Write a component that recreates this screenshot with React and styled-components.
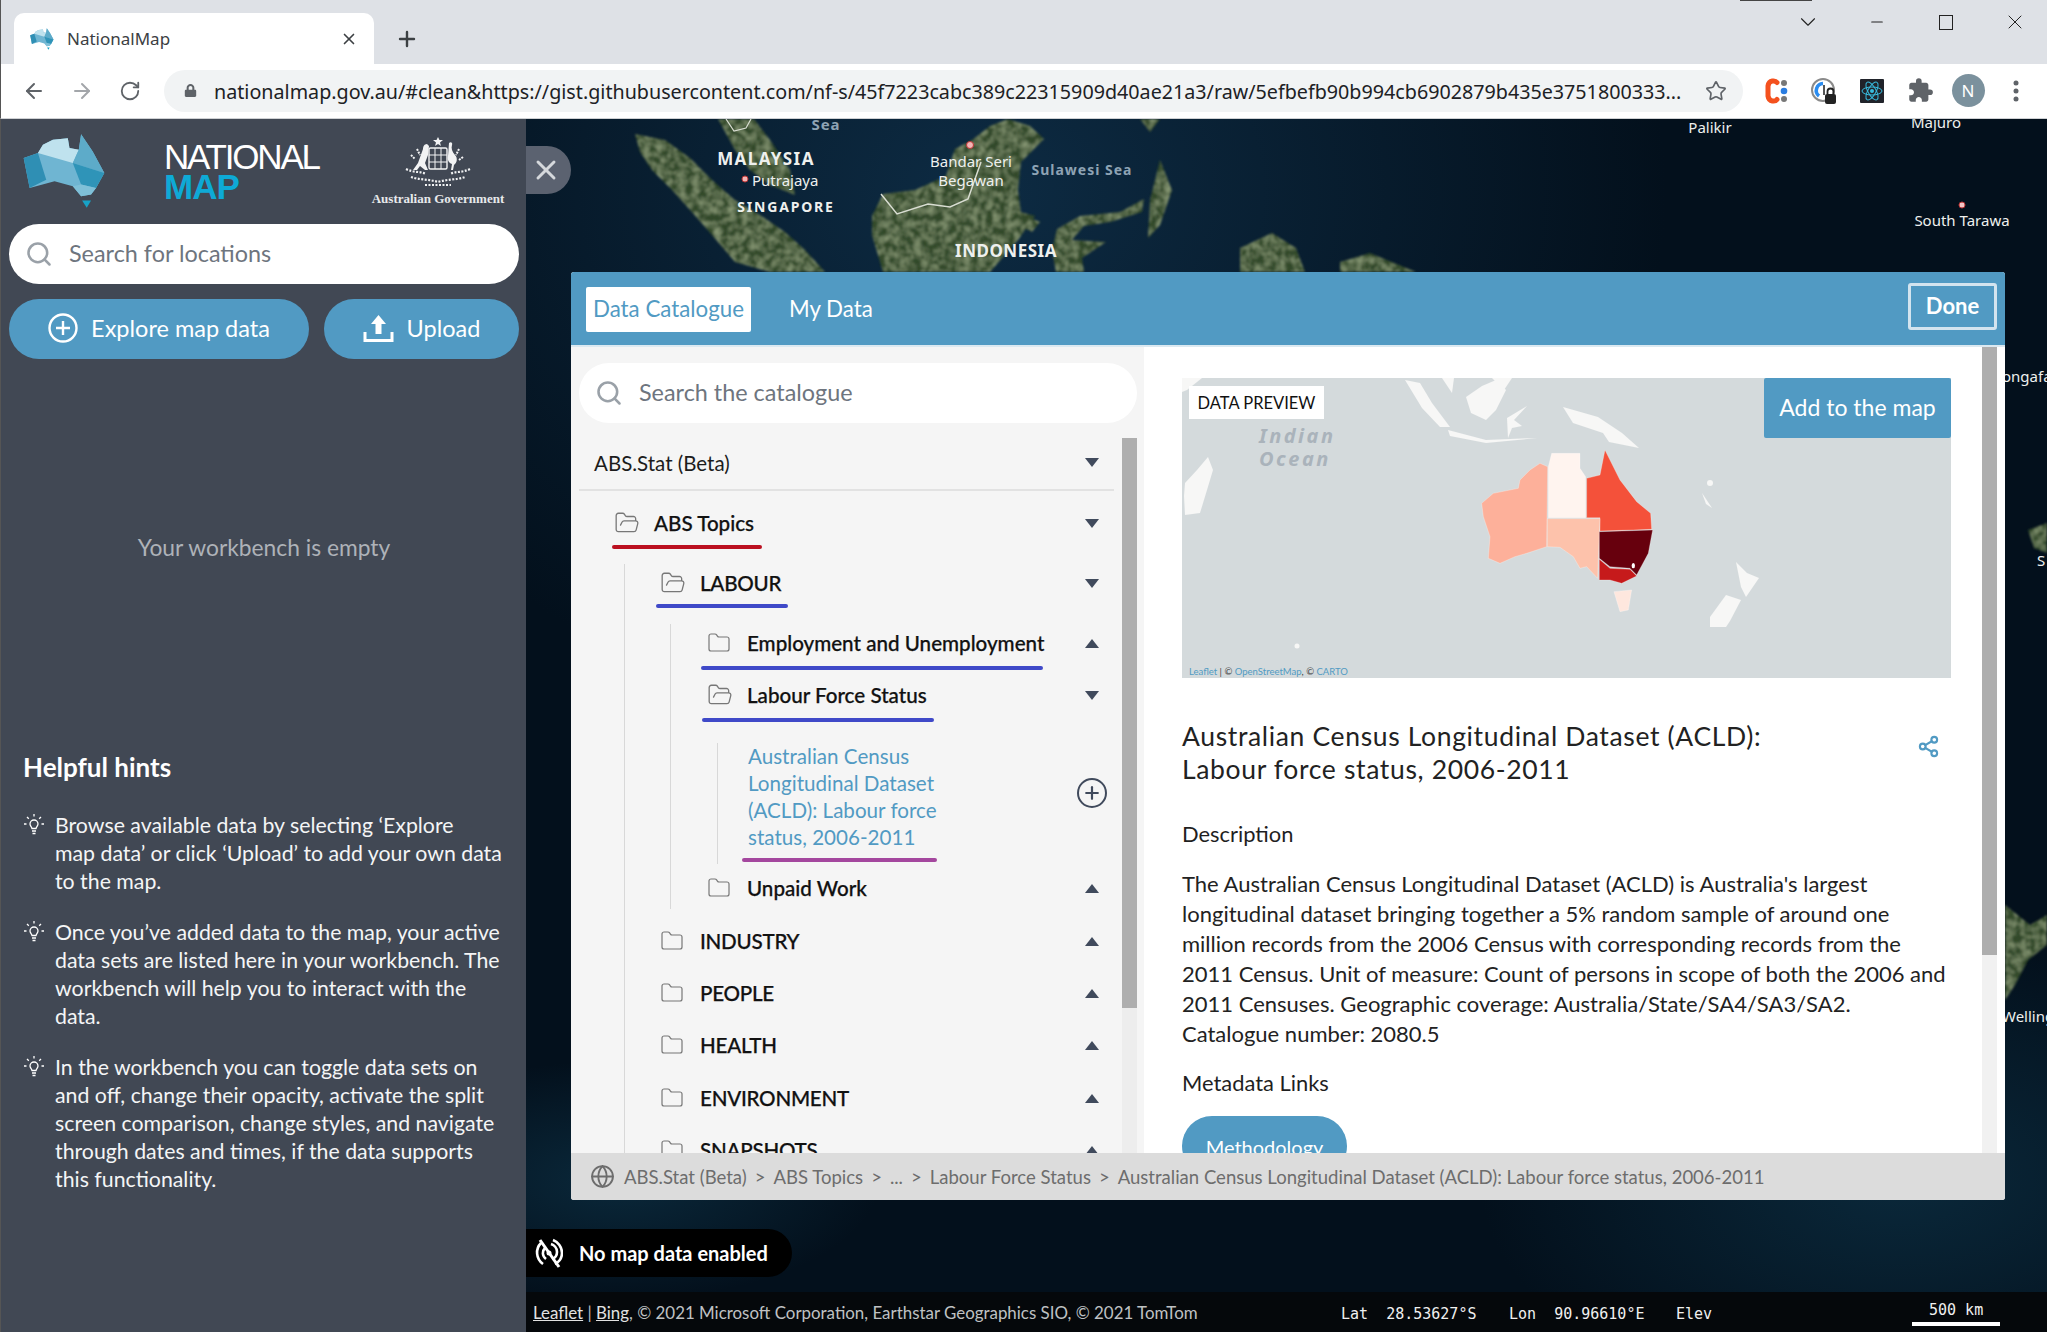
import React from 'react';
import styled, { createGlobalStyle } from 'styled-components';
import { ArrowLeft, ArrowRight, RotateCw, Star, Plus, X, Search, Minus, ChevronDown, Globe, Folder, FolderOpen, Share2 } from 'lucide-react';
import { FaLock } from 'react-icons/fa';
import { MdExtension } from 'react-icons/md';

const GlobalStyle = createGlobalStyle`
  html, body {
    margin: 0;
    padding: 0;
    background: #04101c;
  }
  * {
    box-sizing: border-box;
  }
`;

const BLUE = '#519ac3';
const UI_FONT = "Lato, 'Noto Sans', sans-serif";

const Page = styled.div`
  width: 2047px;
  height: 1332px;
  display: flex;
  flex-direction: column;
  overflow: hidden;
  font-family: ${UI_FONT};
`;

/* browser chrome */
const TabStrip = styled.div`
  position: relative;
  height: 64px;
  flex: none;
  display: flex;
  align-items: flex-end;
  padding-left: 13px;
  background: #dee1e6;
  border-left: 1px solid #555;
`;

const Tab = styled.div`
  width: 360px;
  height: 51px;
  display: flex;
  align-items: center;
  padding: 0 16px;
  background: #fff;
  border-radius: 10px 10px 0 0;
  color: #3c4043;
  font-family: 'Noto Sans', sans-serif;
  font-size: 17px;
`;

const TabTitle = styled.span`
  margin-left: 13px;
  flex: 1;
`;

const NewTab = styled.div`
  display: flex;
  align-self: center;
  margin: 13px 0 0 21px;
  color: #3c4043;
`;

const WindowControls = styled.div`
  display: flex;
  align-self: flex-start;
  margin-left: auto;
  margin-right: -2px;
  height: 44px;
`;

const WindowButton = styled.div`
  width: 69px;
  display: flex;
  align-items: center;
  justify-content: center;
  color: #222;
`;

const MaxBox = styled.div`
  width: 14px;
  height: 15px;
  border: 1.5px solid #222;
`;

const ProfileStrip = styled.div`
  position: absolute;
  top: 0;
  left: 1739px;
  width: 72px;
  height: 1px;
  background: #444;
`;

const Toolbar = styled.div`
  height: 55px;
  flex: none;
  display: flex;
  align-items: center;
  padding-bottom: 1px;
  background: #fff;
  border-left: 1px solid #555;
  border-bottom: 1px solid #cfd1d4;
`;

const NavButton = styled.div`
  width: 48px;
  display: flex;
  justify-content: center;
  color: ${p => (p.$muted ? '#a3a6aa' : '#5f6368')};
  margin-left: ${p => p.$first ? '9px' : 0};
`;

const UrlBar = styled.div`
  width: 1579px;
  height: 42px;
  margin-left: 10px;
  display: flex;
  align-items: center;
  padding: 0 16px 0 20px;
  background: #f1f3f4;
  border-radius: 21px;
  color: #5f6368;
`;

const UrlText = styled.div`
  margin-left: 17px;
  padding-top: 1px;
  flex: 1;
  color: #202124;
  font-family: 'Noto Sans', sans-serif;
  font-size: 19.72px;
  white-space: nowrap;
  overflow: hidden;
`;

const Extensions = styled.div`
  display: flex;
  align-items: center;
  margin-left: 9px;
`;

const Extension = styled.div`
  width: 48px;
  display: flex;
  justify-content: center;
  color: #5f6368;
`;

const Avatar = styled.div`
  width: 33px;
  height: 33px;
  display: flex;
  align-items: center;
  justify-content: center;
  border-radius: 50%;
  background: #7b919d;
  color: #fff;
  font-family: 'Noto Sans', sans-serif;
  font-size: 17px;
`;

const Content = styled.div`
  flex: 1;
  display: flex;
  min-height: 0;
`;

/* left sidebar */
const Sidebar = styled.aside`
  width: 526px;
  flex: none;
  padding: 0 7px 0 8px;
  background: #414854;
  border-left: 1px solid #555;
  color: #fff;
`;

const LogoRow = styled.div`
  height: 105px;
  display: flex;
  align-items: flex-start;
  padding: 14px 16px 0 14px;
`;

const Wordmark = styled.div`
  margin: 9px 0 0 58px;
  line-height: 30px;
  font-family: 'Liberation Sans', sans-serif;
  font-size: 35px;
`;

const WordLine = styled.div`
  color: ${p => p.$accent ? '#0eaad6' : '#fff'};
  font-weight: ${p => p.$accent ? 700 : 400};
  letter-spacing: ${p => p.$accent ? '-1px' : '-2.2px'};
`;

const GovBlock = styled.div`
  width: 130px;
  margin-left: auto;
  margin-top: 4px;
  display: flex;
  flex-direction: column;
  align-items: center;
  gap: 2px;
`;

const GovText = styled.div`
  font-family: 'Liberation Serif', serif;
  font-size: 13px;
  font-weight: 700;
  white-space: nowrap;
  color: #e8eaec;
`;

const SearchPill = styled.div`
  height: 60px;
  display: flex;
  align-items: center;
  padding-left: 16px;
  background: #fff;
  border-radius: 30px;
  color: #9aa1a8;
`;

const SearchLabel = styled.span`
  margin-left: 16px;
  padding-bottom: 2px;
  color: #6e757e;
  font-size: 23.4px;
`;

const ButtonRow = styled.div`
  display: flex;
  gap: 15px;
  margin-top: 15px;
`;

const PillButton = styled.div`
  width: ${p => p.$w}px;
  height: 60px;
  display: flex;
  align-items: center;
  justify-content: center;
  gap: 13px;
  padding-bottom: 2px;
  background: ${BLUE};
  border-radius: 30px;
  color: #fff;
  font-size: 23.5px;
`;

const EmptyNote = styled.div`
  margin-top: 172px;
  text-align: center;
  color: #aeb2b8;
  font-size: 22.8px;
  line-height: 32px;
`;

const HintTitle = styled.h3`
  margin: 189px 0 0 14px;
  font-size: 26px;
  line-height: 30px;
  font-weight: 700;
`;

const HintList = styled.div`
  margin: 29px 0 0 14px;
  display: flex;
  flex-direction: column;
  gap: 23px;
`;

const Hint = styled.div`
  display: flex;
  font-size: 21.3px;
  line-height: 28px;
  white-space: nowrap;
  color: #f4f5f6;
`;

const HintIcon = styled.div`
  width: 32px;
  flex: none;
  padding-top: 2px;
`;

/* map side */
const MapArea = styled.main`
  position: relative;
  flex: 1;
  display: flex;
  flex-direction: column;
  min-width: 0;
`;

const MapBackdrop = styled.svg`
  position: absolute;
  inset: 0;
  width: 100%;
  height: 100%;
`;

const CloseTab = styled.div`
  position: absolute;
  top: 27px;
  left: 0;
  width: 45px;
  height: 48px;
  display: flex;
  align-items: center;
  justify-content: center;
  padding-right: 5px;
  background: #5b6270;
  border-radius: 0 24px 24px 0;
  color: #d5d8dc;
`;

const Panel = styled.section`
  position: relative;
  width: 1434px;
  height: 928px;
  margin: 153px 0 0 45px;
  display: flex;
  flex-direction: column;
  overflow: hidden;
  border-radius: 3px;
  background: #fff;
`;

const PanelHeader = styled.header`
  height: 75px;
  flex: none;
  display: flex;
  align-items: flex-start;
  padding: 15px 8px 0 15px;
  background: ${BLUE};
  border-bottom: 2px solid #dbe9f1;
`;

const HeaderTab = styled.div`
  height: 45px;
  display: flex;
  align-items: center;
  padding: 0 7px 3px;
  margin-right: 31px;
  border-radius: 2px;
  background: ${p => p.$active ? '#fff' : 'transparent'};
  color: ${p => p.$active ? BLUE : '#fff'};
  font-size: 22.3px;
`;

const DoneButton = styled.div`
  width: 89px;
  height: 47px;
  margin: -4px 0 0 auto;
  display: flex;
  align-items: center;
  justify-content: center;
  padding-bottom: 2px;
  border: 3px solid #d3e4ef;
  border-radius: 3px;
  color: #fff;
  font-size: 22px;
  font-weight: 700;
`;

const PanelBody = styled.div`
  flex: 1;
  display: flex;
  min-height: 0;
  overflow: hidden;
`;

const CatalogueColumn = styled.div`
  width: 573px;
  flex: none;
  padding-top: 16px;
  background: #f5f5f5;
`;

const CatalogueSearch = styled.div`
  margin: 0 7px 0 8px;
`;

const TreeWrap = styled.div`
  display: flex;
  height: 800px;
  margin-top: 15px;
`;

const Tree = styled.div`
  width: 551px;
  flex: none;
  color: #111;
  font-size: 20.6px;
`;

const VerticalBar = styled.div`
  width: 15px;
  height: 100%;
  flex: none;
  background: ${p => p.$track};
`;

const VerticalThumb = styled.div`
  height: ${p => p.$h}px;
  background: #aeaeae;
`;

const SourceRow = styled.div`
  height: 53px;
  margin: 0 8px;
  display: flex;
  align-items: center;
  padding: 0 15px 2px 15px;
  border-bottom: 2px solid #e2e2e2;
  font-size: 20.5px;
  color: #1c1c1c;
`;

const SourceLabel = styled.span`
  flex: 1;
`;

const Row = styled.div`
  height: 40px;
  display: flex;
  align-items: center;
  margin-top: ${p => p.$mt || 0}px;
  padding: 0 23px 2px ${p => p.$pad}px;
  font-weight: 500;
`;

const RowIcon = styled.div`
  width: 40px;
  flex: none;
  display: flex;
  color: #777;
`;

const RowLabel = styled.span`
  flex: 1;
  white-space: nowrap;
  letter-spacing: ${p => p.$caps ? '-0.25px' : 0};
  -webkit-text-stroke: 0.25px #111;
`;

const Caret = styled.div`
  width: 0;
  height: 0;
  border-left: 7.5px solid transparent;
  border-right: 7.5px solid transparent;
  border-top: ${p => p.$up ? '0' : '9px solid #404a5c'};
  border-bottom: ${p => p.$up ? '9px solid #404a5c' : '0'};
`;

const Mark = styled.div`
  height: 4px;
  width: ${p => p.$w}px;
  margin-top: ${p => p.$mt || 0}px;
  margin-left: ${p => p.$left}px;
  border-radius: 2px;
  background: ${p => p.$color};
`;

const Branch = styled.div`
  margin-left: ${p => p.$left}px;
  padding-bottom: ${p => p.$tail || 0}px;
  border-left: 1.5px solid #d8d8d8;
`;

const DatasetRow = styled.div`
  display: flex;
  align-items: center;
  margin-top: 21px;
  padding: 0 15px 0 30px;
`;

const DatasetLink = styled.div`
  flex: 1;
  color: ${BLUE};
  font-size: 20.6px;
  line-height: 27px;
  white-space: nowrap;
`;

const AddCircle = styled.div`
  width: 30px;
  height: 30px;
  margin-bottom: 8px;
  display: flex;
  align-items: center;
  justify-content: center;
  border: 2.5px solid #404a5c;
  border-radius: 50%;
  color: #404a5c;
`;

const DetailColumn = styled.div`
  flex: 1;
  display: flex;
  min-width: 0;
  padding: 0 8px 0 38px;
  background: #fff;
`;

const Detail = styled.div`
  width: 769px;
  flex: none;
  margin-right: 31px;
  padding-top: 31px;
  color: #1f1f1f;
`;

const Preview = styled.div`
  position: relative;
  height: 300px;
  background: #d4dadc;
`;

const PreviewTag = styled.div`
  position: absolute;
  top: 8px;
  left: 7px;
  width: 135px;
  height: 33px;
  display: flex;
  align-items: center;
  justify-content: center;
  background: #fff;
  color: #111;
  font-size: 16.5px;
`;

const AddButton = styled.div`
  position: absolute;
  top: 0;
  right: 0;
  width: 187px;
  height: 60px;
  display: flex;
  align-items: center;
  justify-content: center;
  padding-bottom: 3px;
  background: ${BLUE};
  border-radius: 2px;
  color: #fff;
  font-size: 23px;
`;

const Attribution = styled.div`
  position: absolute;
  left: 7px;
  bottom: 1px;
  font-size: 9.5px;
  color: #444;

  span {
    color: ${BLUE};
  }
`;

const TitleRow = styled.div`
  display: flex;
  margin-top: 42px;
  justify-content: space-between;
  align-items: flex-start;
`;

const DatasetTitle = styled.h2`
  margin: 0;
  font-size: 26.5px;
  letter-spacing: 0.65px;
  line-height: 33px;
  font-weight: 400;
  white-space: nowrap;
  color: #222;
`;

const ShareIcon = styled.div`
  margin: 15px 11px 0 0;
  color: ${BLUE};
`;

const SectionLabel = styled.div`
  margin-top: ${p => p.$mt}px;
  font-size: 21.9px;
  line-height: 30px;
`;

const Paragraph = styled.div`
  margin-top: 20px;
  font-size: 22px;
  line-height: 30px;
  white-space: nowrap;
  color: #222;
`;

const LinkButton = styled.div`
  width: 165px;
  height: 60px;
  margin-top: 18px;
  padding-top: 19px;
  text-align: center;
  background: ${BLUE};
  border-radius: 30px;
  color: #fff;
  font-size: 20px;
`;

const Breadcrumbs = styled.footer`
  height: 47px;
  flex: none;
  display: flex;
  align-items: center;
  padding-left: 19px;
  background: #dcdcdc;
  color: #6d6d6d;
  font-size: 18.55px;
  white-space: nowrap;
`;

const CrumbGlobe = styled.div`
  display: flex;
  margin-right: 9px;
`;

const CrumbSep = styled.span`
  margin: 0 8px;
`;

const NoDataPill = styled.div`
  position: relative;
  width: 266px;
  height: 48px;
  margin-top: 29px;
  display: flex;
  align-items: center;
  gap: 16px;
  padding-left: 9px;
  background: #000;
  border-radius: 0 24px 24px 0;
  color: #fff;
  font-size: 20px;
  font-weight: 700;
`;

const StatusBar = styled.div`
  position: relative;
  height: 40px;
  margin-top: auto;
  display: grid;
  grid-template-columns: 808px 168px 167px 236px 1fr;
  align-items: center;
  padding-left: 7px;
  background: #05080b;
  color: #bfc1c3;
  font-size: 16.9px;
`;

const Credit = styled.div`
  white-space: nowrap;

  u {
    color: #e2e2e2;
  }
`;

const Coord = styled.div`
  padding-top: 3px;
  font-family: 'DejaVu Sans Mono', 'Liberation Mono', monospace;
  font-size: 15px;
  white-space: pre;
  color: #f0f0f0;
`;

const ScaleBar = styled.div`
  width: 88px;
  height: 28px;
  padding: 3px 0 0 17px;
  border-bottom: 4px solid #fff;
  font-family: 'DejaVu Sans Mono', 'Liberation Mono', monospace;
  font-size: 15px;
  white-space: pre;
  color: #f0f0f0;
`;

const MapLabel = styled.text`
  font-family: 'Noto Sans', sans-serif;
  fill: ${p => p.$fill || '#eef0ee'};
  font-size: ${p => p.$size || 15}px;
  font-weight: ${p => p.$bold ? 700 : 400};
  letter-spacing: ${p => p.$track || 0}px;
  text-anchor: ${p => p.$start ? 'start' : 'middle'};
  dominant-baseline: central;
`;

const PreviewTitle = styled.text`
  font-family: 'Noto Sans', sans-serif;
  font-size: 20px;
  font-style: italic;
  font-weight: 700;
  letter-spacing: 2.5px;
  fill: #aab3bb;
`;

const AustraliaLogo = ({ width = 83, height = 76 }) => (
  <svg width={width} height={height} viewBox="40 25 250 228">
    <polygon points="42,100 85,85 100,60 130,45 175,40 180,70 208,75 215,28 250,80 285,145 260,190 245,210 215,215 190,185 135,170 60,190" fill="#6fb5d2" />
    <polygon points="85,85 100,60 130,45 175,40 180,70 208,75 190,115" fill="#bfe2ee" />
    <polygon points="42,100 85,85 110,165 60,190" fill="#2f8fb4" />
    <polygon points="208,75 215,28 250,80 285,145 190,115" fill="#5dabc9" />
    <polygon points="190,115 285,145 260,190 215,180" fill="#2f94b8" />
    <polygon points="215,180 260,190 245,210 215,215 190,185" fill="#7fc0d8" />
    <polygon points="218,228 245,228 232,250" fill="#17a2c6" />
  </svg>
);

const CoatOfArms = () => (
  <svg width="70" height="52" viewBox="0 0 70 52" fill="none" stroke="#f2f3f4">
    <polygon points="35,0 36.5,3 40,3 37,5.5 38,9 35,7 32,9 33,5.5 30,3 33.5,3" fill="#f2f3f4" stroke="none" />
    <rect x="26" y="11" width="18" height="21" rx="1.5" strokeWidth="1.4" />
    <path d="M26 18h18M26 25h18M32 11v21M38 11v21" strokeWidth="1" />
    <path d="M24 7c-3 0-4 3-4 5l-5 14-5 7h4l3-4 5 4h3l-3-7 3-8 1-9z" fill="#f2f3f4" stroke="none" />
    <path d="M46 6c2-2 4 0 3 2-1 3 0 7 3 10 3 3 2 8-1 10l-1 5h-2l1-6c-3-1-5-4-4-8z" fill="#f2f3f4" stroke="none" />
    <path d="M3 32c8 4 14 2 20 5M67 32c-8 4-14 2-20 5M8 40c8 3 18 2 27 5 9-3 19-2 27-5M22 48h26" strokeWidth="2.2" strokeDasharray="2 1.5" />
    <path d="M14 12l3 6M8 18l4 4M56 12l-3 6M60 20l-4 3" strokeWidth="2" strokeDasharray="2 1" />
  </svg>
);

const BulbIcon = () => (
  <svg width="22" height="22" viewBox="0 0 22 22" fill="none" stroke="#fff" strokeWidth="1.3">
    <path d="M11 1v2.500M1 11h2.500M18.500 11H21M4 4l1.800 1.800M18 4l-1.800 1.800" />
    <path d="M7 11a4 4 0 1 1 8 0c0 1.700-1.500 2.500-2 4.500H9c-.5-2-2-2.800-2-4.500z" />
    <path d="M9 18h4M9.500 20.500h3" />
  </svg>
);

const CExtension = () => (
  <svg width="26" height="28" viewBox="0 0 26 28">
    <path d="M14 5.500C12.500 3.500 6 2.500 5 9v10c1 6.500 7.500 5.500 9 3.500" fill="none" stroke="#f4511e" strokeWidth="5" strokeLinecap="round" />
    <circle cx="21" cy="6" r="3" fill="#777" />
    <circle cx="21" cy="14" r="3.300" fill="#2a7de1" />
    <circle cx="21" cy="22" r="3" fill="#777" />
  </svg>
);

const PassExtension = () => (
  <svg width="26" height="28" viewBox="0 0 26 28" fill="none">
    <circle cx="12" cy="13" r="11" stroke="#8a8a8a" strokeWidth="2" />
    <path d="M12 6.500a7 7 0 0 0-4 12.500" stroke="#2a8cf0" strokeWidth="3.500" />
    <path d="M13 8v10" stroke="#555" strokeWidth="2" />
    <rect x="14" y="17" width="11" height="10" rx="2" fill="#222" />
    <path d="M16.500 17v-2.500a3 3 0 0 1 6 0V17" stroke="#222" strokeWidth="1.800" />
  </svg>
);

const ReactExtension = () => (
  <svg width="24" height="24" viewBox="0 0 24 24" fill="none" stroke="#38bde0" strokeWidth="1">
    <rect width="24" height="24" rx="1" fill="#20232a" stroke="none" />
    <ellipse cx="12" cy="12" rx="10" ry="4" />
    <ellipse cx="12" cy="12" rx="10" ry="4" transform="rotate(60 12 12)" />
    <ellipse cx="12" cy="12" rx="10" ry="4" transform="rotate(120 12 12)" />
    <circle cx="12" cy="12" r="2" fill="#38bde0" stroke="none" />
  </svg>
);

const AddPlus = () => (
  <svg width="30" height="30" viewBox="0 0 30 30" fill="none" stroke="#fff" strokeWidth="2.400">
    <circle cx="15" cy="15" r="13.500" />
    <path d="M15 8v14M8 15h14" />
  </svg>
);

const UploadTray = () => (
  <svg width="31" height="30" viewBox="0 0 31 30" fill="#fff">
    <polygon points="15.500,2 23,11 18.500,11 18.500,21 12.500,21 12.500,11 8,11" />
    <path d="M2 19v8.500h27V19" fill="none" stroke="#fff" strokeWidth="3" />
  </svg>
);

const NoDataIcon = () => (
  <svg width="28" height="30" viewBox="0 0 28 30" fill="none" stroke="#fff" strokeWidth="2.600">
    <path d="M8 26C1 21 0 11 6 5M11 21c-4-3-4-8-1-11" />
    <path d="M20 26c4-2 7-6 7-11 0-6-4-11-9-13M17 21c3-1 5-4 5-7 0-4-3-7-6-8" />
    <circle cx="14" cy="15" r="2.500" fill="#fff" stroke="none" />
    <path d="M5 2l19 27" strokeWidth="3" />
  </svg>
);

const LAND = [
  '635,134 665,140 690,158 712,180 735,200 760,215 785,232 805,250 825,272 770,272 735,262 712,235 690,210 672,190 652,170 640,152',
  '718,119 754,119 770,140 790,170 795,195 770,185 750,170 735,150 724,130',
  '990,126 1008,119 1030,126 1044,139 1021,162 1018,190 1021,212 1035,216 1018,240 990,272 883,272 872,235 872,216 883,194 915,190 946,176 955,149 972,140',
  '1057,229 1080,216 1120,212 1144,199 1142,212 1110,222 1084,226 1072,240 1106,242 1082,258 1084,272 1056,272 1052,250',
  '1160,160 1172,190 1160,225 1148,238 1150,200',
  '1240,248 1272,233 1296,248 1305,272 1240,272',
  '1340,262 1370,253 1416,272 1340,272',
  '1024,215 1040,222 1032,232 1024,228',
  '1140,119 1160,119 1150,132',
  '2005,905 2030,925 2047,915 2047,945 2028,960 2015,985 2005,1000',
  '2028,530 2047,523 2047,553 2034,548',
];

const MapLabels = () => (
  <g>
    <MapLabel x="826" y="124" $fill="#8ea3b4" $bold $track={1}>Sea</MapLabel>
    <MapLabel x="766" y="158" $size={17} $bold $track={1.4}>MALAYSIA</MapLabel>
    <MapLabel x="752" y="180" $start $size={15}>Putrajaya</MapLabel>
    <MapLabel x="786" y="206" $size={14} $bold $track={1.8}>SINGAPORE</MapLabel>
    <MapLabel x="971" y="161" $size={15}>Bandar Seri</MapLabel>
    <MapLabel x="971" y="180" $size={15}>Begawan</MapLabel>
    <MapLabel x="1082" y="169" $size={14} $bold $track={1} $fill="#8ea3b4">Sulawesi Sea</MapLabel>
    <MapLabel x="1006" y="250" $size={17} $bold $track={0.5}>INDONESIA</MapLabel>
    <MapLabel x="1710" y="127" $size={15}>Palikir</MapLabel>
    <MapLabel x="1936" y="122" $size={15}>Majuro</MapLabel>
    <MapLabel x="1962" y="220" $size={15}>South Tarawa</MapLabel>
    <MapLabel x="2002" y="376" $start $size={15}>ongafa</MapLabel>
    <MapLabel x="2037" y="560" $start $size={15}>S</MapLabel>
    <MapLabel x="2002" y="1016" $start $size={15}>Wellingt</MapLabel>
  </g>
);

const MapCanvas = () => (
  <MapBackdrop viewBox="526 119 1521 1213" preserveAspectRatio="none">
    <defs>
      <radialGradient id="seaA" cx="0.3" cy="0.06" r="0.45">
        <stop offset="0" stopColor="#0d2b43" />
        <stop offset="1" stopColor="#03101c" />
      </radialGradient>
      <radialGradient id="seaB" cx="0.5" cy="0.5" r="0.5">
        <stop offset="0" stopColor="#0b2b3e" stopOpacity="0.9" />
        <stop offset="1" stopColor="#0b2b3e" stopOpacity="0" />
      </radialGradient>
      <filter id="landTexture" x="-5%" y="-5%" width="110%" height="110%">
        <feTurbulence type="fractalNoise" baseFrequency="0.14" numOctaves="3" seed="4" result="noise" />
        <feColorMatrix in="noise" type="matrix" values="0 0 0 0 0.36  0 0 0 0 0.45  0 0 0 0 0.26  0 0 0 1.2 -0.42" result="tint" />
        <feComposite in="tint" in2="SourceAlpha" operator="in" result="mottle" />
        <feMerge result="merged">
          <feMergeNode in="SourceGraphic" />
          <feMergeNode in="mottle" />
        </feMerge>
        <feGaussianBlur in="merged" stdDeviation="1.3" />
      </filter>
    </defs>
    <rect x="526" y="119" width="1521" height="1213" fill="url(#seaA)" />
    <ellipse cx="1900" cy="1180" rx="420" ry="240" fill="url(#seaB)" />
    <ellipse cx="620" cy="1180" rx="260" ry="120" fill="url(#seaB)" />
    <g fill="#33482b" filter="url(#landTexture)">
      {LAND.map((pts) => <polygon key={pts} points={pts} />)}
    </g>
    <path d="M881 194l16 20 31-10 22 3 18-8 13-37" fill="none" stroke="#d9ddd2" strokeWidth="1.500" />
    <path d="M726 119l8 12 12-3 5-9" fill="none" stroke="#d9ddd2" strokeWidth="1.200" />
    <circle cx="745" cy="179" r="3" fill="#f4b5b5" stroke="#b33" />
    <circle cx="970" cy="145" r="3.500" fill="#f4b5b5" stroke="#b33" />
    <circle cx="1962" cy="205" r="3" fill="#f4c5c5" stroke="#b33" />
    <MapLabels />
  </MapBackdrop>
);

const PreviewLand = [
  '26,79 31,92 25,112 18,135 3,137 2,118 3,105 15,92',
  '223,2 238,5 250,25 268,49 258,49 240,30',
  '266,52 304,62 355,60 304,65 268,58',
  '284,19 300,8 314,2 324,12 314,32 304,42 289,35',
  '325,40 345,28 332,42 340,48 330,50 326,60',
  '381,29 416,39 440,55 457,70 427,64 421,55 391,45',
  '554,184 565,195 577,200 564,219 559,209',
  '544,217 559,222 548,243 544,249 528,249 528,239',
  '0,0 20,0 5,12 0,14',
  '310,0 330,0 322,12',
  '260,0 272,0 270,15',
];

const PreviewMap = () => (
  <svg width="769" height="300" viewBox="0 0 769 300">
    <defs>
      <filter id="soften">
        <feGaussianBlur stdDeviation="0.6" />
      </filter>
    </defs>
    <g fill="#f7f7f6" filter="url(#soften)">
      {PreviewLand.map((pts) => <polygon key={pts} points={pts} />)}
      <circle cx="115" cy="268" r="2.500" />
      <circle cx="528" cy="105" r="3" />
      <polygon points="520,115 530,130 524,126" />
    </g>
    <PreviewTitle x="77" y="65">Indian</PreviewTitle>
    <PreviewTitle x="77" y="88">Ocean</PreviewTitle>
    <g stroke="#fff" strokeWidth="1" strokeOpacity="0.8" transform="translate(258 72) scale(0.3333)">
      <polygon fill="#fdb09a" points="323,50 300,40 270,60 240,90 235,115 160,130 125,160 130,200 150,260 145,325 180,340 225,320 260,310 320,290" />
      <polygon fill="#fff4ef" points="325,50 335,10 420,10 420,55 437,80 437,203 325,203" />
      <polygon fill="#f4513a" points="440,85 480,75 495,0 540,90 590,155 632,190 635,238 580,240 480,243 480,203 440,203" />
      <polygon fill="#fdc2ab" points="322,206 480,206 475,325 473,385 440,350 420,355 400,320 360,292 322,290" />
      <polygon fill="#67000d" points="478,245 638,240 625,310 590,375 570,355 510,350 478,325" />
      <polygon fill="#c61a1b" points="478,328 510,355 570,358 590,378 545,400 510,390 478,390" />
      <polygon fill="#fee7de" points="522,425 575,420 565,480 540,485" />
      <ellipse fill="#fff" stroke="none" cx="580" cy="347" rx="5" ry="8" />
    </g>
  </svg>
);

const tree = [
  { label: 'INDUSTRY', mt: 13 },
  { label: 'PEOPLE', mt: 12 },
  { label: 'HEALTH', mt: 12 },
  { label: 'ENVIRONMENT', mt: 13 },
  { label: 'SNAPSHOTS', mt: 12 },
];

const hints = [
  ['Browse available data by selecting ‘Explore', 'map data’ or click ‘Upload’ to add your own data', 'to the map.'],
  ['Once you’ve added data to the map, your active', 'data sets are listed here in your workbench. The', 'workbench will help you to interact with the', 'data.'],
  ['In the workbench you can toggle data sets on', 'and off, change their opacity, activate the split', 'screen comparison, change styles, and navigate', 'through dates and times, if the data supports', 'this functionality.'],
];

const description = [
  'The Australian Census Longitudinal Dataset (ACLD) is Australia\'s largest',
  'longitudinal dataset bringing together a 5% random sample of around one',
  'million records from the 2006 Census with corresponding records from the',
  '2011 Census. Unit of measure: Count of persons in scope of both the 2006 and',
  '2011 Censuses. Geographic coverage: Australia/State/SA4/SA3/SA2.',
  'Catalogue number: 2080.5',
];

const crumbs = ['ABS.Stat (Beta)', 'ABS Topics', '...', 'Labour Force Status', 'Australian Census Longitudinal Dataset (ACLD): Labour force status, 2006-2011'];

const App = () => {
  return (
    <Page>
      <GlobalStyle />
      <TabStrip>
        <ProfileStrip />
        <Tab>
          <AustraliaLogo width={24} height={22} />
          <TabTitle>NationalMap</TabTitle>
          <X size={18} strokeWidth={2.2} />
        </Tab>
        <NewTab><Plus size={24} strokeWidth={2.4} /></NewTab>
        <WindowControls>
          <WindowButton><ChevronDown size={26} strokeWidth={1} /></WindowButton>
          <WindowButton><Minus size={18} strokeWidth={1.5} /></WindowButton>
          <WindowButton><MaxBox /></WindowButton>
          <WindowButton><X size={24} strokeWidth={1} /></WindowButton>
        </WindowControls>
      </TabStrip>
      <Toolbar>
        <NavButton $first><ArrowLeft size={24} strokeWidth={2} /></NavButton>
        <NavButton $muted><ArrowRight size={24} strokeWidth={2} /></NavButton>
        <NavButton><RotateCw size={22} strokeWidth={2} /></NavButton>
        <UrlBar>
          <FaLock size={13} />
          <UrlText>nationalmap.gov.au/#clean&amp;https://gist.githubusercontent.com/nf-s/45f7223cabc389c22315909d40ae21a3/raw/5efbefb90b994cb6902879b435e3751800333...</UrlText>
          <Star size={22} strokeWidth={1.8} />
        </UrlBar>
        <Extensions>
          <Extension><CExtension /></Extension>
          <Extension><PassExtension /></Extension>
          <Extension><ReactExtension /></Extension>
          <Extension><MdExtension size={27} /></Extension>
          <Extension><Avatar>N</Avatar></Extension>
          <Extension>
            <svg width="6" height="22" viewBox="0 0 6 22" fill="#5f6368">
              <circle cx="3" cy="3" r="2.500" />
              <circle cx="3" cy="11" r="2.500" />
              <circle cx="3" cy="19" r="2.500" />
            </svg>
          </Extension>
        </Extensions>
      </Toolbar>
      <Content>
        <Sidebar>
          <LogoRow>
            <AustraliaLogo />
            <Wordmark>
              <WordLine>NATIONAL</WordLine>
              <WordLine $accent>MAP</WordLine>
            </Wordmark>
            <GovBlock>
              <CoatOfArms />
              <GovText>Australian Government</GovText>
            </GovBlock>
          </LogoRow>
          <SearchPill>
            <Search size={28} strokeWidth={2.2} />
            <SearchLabel>Search for locations</SearchLabel>
          </SearchPill>
          <ButtonRow>
            <PillButton $w={300}>
              <AddPlus />
              Explore map data
            </PillButton>
            <PillButton $w={195}>
              <UploadTray />
              Upload
            </PillButton>
          </ButtonRow>
          <EmptyNote>Your workbench is empty</EmptyNote>
          <HintTitle>Helpful hints</HintTitle>
          <HintList>
            {hints.map((lines) => (
              <Hint key={lines[0]}>
                <HintIcon><BulbIcon /></HintIcon>
                <div>
                  {lines.map((line) => <div key={line}>{line}</div>)}
                </div>
              </Hint>
            ))}
          </HintList>
        </Sidebar>
        <MapArea>
          <MapCanvas />
          <CloseTab><X size={32} strokeWidth={2.2} /></CloseTab>
          <Panel>
            <PanelHeader>
              <HeaderTab $active>Data Catalogue</HeaderTab>
              <HeaderTab>My Data</HeaderTab>
              <DoneButton>Done</DoneButton>
            </PanelHeader>
            <PanelBody>
              <CatalogueColumn>
                <CatalogueSearch>
                  <SearchPill>
                    <Search size={28} strokeWidth={2.2} />
                    <SearchLabel>Search the catalogue</SearchLabel>
                  </SearchPill>
                </CatalogueSearch>
                <TreeWrap>
                  <Tree>
                    <SourceRow>
                      <SourceLabel>ABS.Stat (Beta)</SourceLabel>
                      <Caret />
                    </SourceRow>
                    <Row $pad={43} $mt={13}>
                      <RowIcon><FolderOpen size={26} strokeWidth={1.2} /></RowIcon>
                      <RowLabel>ABS Topics</RowLabel>
                      <Caret />
                    </Row>
                    <Mark $left={41} $w={150} $mt={1} $color="#bb1020" />
                    <Branch $left={53}>
                      <Row $pad={35} $mt={15}>
                        <RowIcon><FolderOpen size={26} strokeWidth={1.2} /></RowIcon>
                        <RowLabel $caps>LABOUR</RowLabel>
                        <Caret />
                      </Row>
                      <Mark $left={31} $w={132} $color="#3f49c8" />
                      <Branch $left={45}>
                        <Row $pad={36} $mt={16}>
                          <RowIcon><Folder size={24} strokeWidth={1.2} /></RowIcon>
                          <RowLabel>Employment and Unemployment</RowLabel>
                          <Caret $up />
                        </Row>
                        <Mark $left={30} $w={342} $mt={2} $color="#3f49c8" />
                        <Row $pad={36} $mt={6}>
                          <RowIcon><FolderOpen size={26} strokeWidth={1.2} /></RowIcon>
                          <RowLabel>Labour Force Status</RowLabel>
                          <Caret />
                        </Row>
                        <Mark $left={31} $w={232} $mt={2} $color="#3f49c8" />
                        <Branch $left={46} $tail={2}>
                          <DatasetRow>
                            <DatasetLink>
                              <div>Australian Census</div>
                              <div>Longitudinal Dataset</div>
                              <div>(ACLD): Labour force</div>
                              <div>status, 2006-2011</div>
                            </DatasetLink>
                            <AddCircle><Plus size={20} strokeWidth={2.6} /></AddCircle>
                          </DatasetRow>
                          <Mark $left={24} $w={195} $mt={7} $color="#a4479e" />
                        </Branch>
                        <Row $pad={36} $mt={5}>
                          <RowIcon><Folder size={24} strokeWidth={1.2} /></RowIcon>
                          <RowLabel>Unpaid Work</RowLabel>
                          <Caret $up />
                        </Row>
                      </Branch>
                      {tree.map((item) => (
                        <Row key={item.label} $pad={35} $mt={item.mt}>
                          <RowIcon><Folder size={24} strokeWidth={1.2} /></RowIcon>
                          <RowLabel $caps>{item.label}</RowLabel>
                          <Caret $up />
                        </Row>
                      ))}
                    </Branch>
                  </Tree>
                  <VerticalBar $track="#ededed"><VerticalThumb $h={570} /></VerticalBar>
                </TreeWrap>
              </CatalogueColumn>
              <DetailColumn>
                <Detail>
                  <Preview>
                    <PreviewMap />
                    <PreviewTag>DATA PREVIEW</PreviewTag>
                    <AddButton>Add to the map</AddButton>
                    <Attribution><span>Leaflet</span> | © <span>OpenStreetMap</span>, © <span>CARTO</span></Attribution>
                  </Preview>
                  <TitleRow>
                    <DatasetTitle>
                      <div>Australian Census Longitudinal Dataset (ACLD):</div>
                      <div>Labour force status, 2006-2011</div>
                    </DatasetTitle>
                    <ShareIcon><Share2 size={23} strokeWidth={2.2} /></ShareIcon>
                  </TitleRow>
                  <SectionLabel $mt={33}>Description</SectionLabel>
                  <Paragraph>
                    {description.map((line) => <div key={line}>{line}</div>)}
                  </Paragraph>
                  <SectionLabel $mt={19}>Metadata Links</SectionLabel>
                  <LinkButton>Methodology</LinkButton>
                </Detail>
                <VerticalBar $track="#f1f1f1"><VerticalThumb $h={608} /></VerticalBar>
              </DetailColumn>
            </PanelBody>
            <Breadcrumbs>
              <CrumbGlobe><Globe size={25} strokeWidth={1.8} /></CrumbGlobe>
              {crumbs.map((crumb, i) => (
                <React.Fragment key={crumb}>
                  {i > 0 && <CrumbSep>&gt;</CrumbSep>}
                  <span>{crumb}</span>
                </React.Fragment>
              ))}
            </Breadcrumbs>
          </Panel>
          <NoDataPill>
            <NoDataIcon />
            No map data enabled
          </NoDataPill>
          <StatusBar>
            <Credit><u>Leaflet</u> | <u>Bing</u>, © 2021 Microsoft Corporation, Earthstar Geographics SIO, © 2021 TomTom</Credit>
            <Coord>Lat  28.53627°S</Coord>
            <Coord>Lon  90.96610°E</Coord>
            <Coord>Elev</Coord>
            <ScaleBar>500 km</ScaleBar>
          </StatusBar>
        </MapArea>
      </Content>
    </Page>
  );
};

export default App;
